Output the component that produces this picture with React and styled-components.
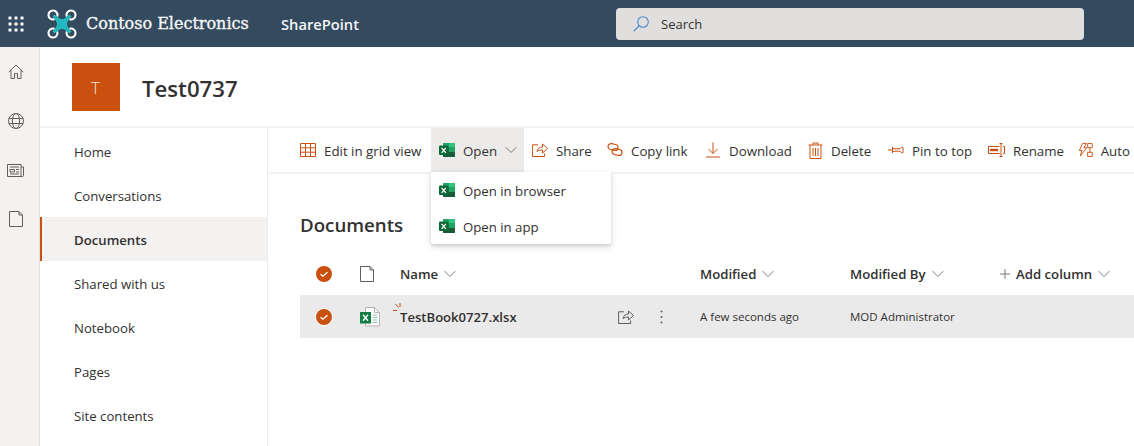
import React from "react";
import styled, { createGlobalStyle } from "styled-components";

const Global = createGlobalStyle`
  html, body { margin: 0; padding: 0; background: #fff; }
  body { font-family: "Open Sans", "Noto Sans", sans-serif; color: #323130; }
`;

const ORANGE = "#ca5010";

const Page = styled.div`
  width: 1134px; height: 446px; overflow: hidden;
  display: flex; flex-direction: column;
`;
const SuiteBar = styled.header`
  height: 47px; flex: none; background: #344a5f; display: flex; align-items: center;
`;
const Waffle = styled.div`
  width: 31px; padding-right: 16px; display: flex; justify-content: center; align-items: center;
`;
const Brand = styled.div`
  display: flex; align-items: center; gap: 9px; width: 234px; color: #fff;
`;
const BrandName = styled.span`
  font-family: "DejaVu Serif", serif; font-size: 16px; color: #f6f6f6;
  -webkit-text-stroke: 0.35px #f6f6f6;
`;
const Product = styled.span`
  width: 335px; font-size: 14.7px; font-weight: 600; color: #f3f6f8;
`;
const SearchBox = styled.div`
  width: 468px; height: 32px; background: #e1dfdd; border-radius: 4px;
  display: flex; align-items: center; gap: 12px; padding-left: 17px; box-sizing: border-box;
  font-size: 13px; color: #323130;
`;
const Main = styled.div`
  flex: 1; display: flex; min-height: 0;
`;
const Rail = styled.nav`
  width: 39px; flex: none; background: #f3f2f1; border-right: 1px solid #e1dfdd;
  display: flex; flex-direction: column; align-items: center; padding-top: 0.5px;
`;
const RailBtn = styled.div`
  height: 49px; width: 39px; display: flex; align-items: center; justify-content: center;
  margin-left: -8px;
`;
const Site = styled.div`
  flex: 1; min-width: 0; display: flex; flex-direction: column;
`;
const SiteHeader = styled.div`
  height: 81px; flex: none; display: flex; align-items: center; padding: 1px 0 0 32px; gap: 22px;
  border-bottom: 2px solid #f3f2f1; box-sizing: border-box;
`;
const SiteLogo = styled.div`
  width: 48px; height: 48px; background: #ca5010; color: #f3e6dc; display: flex;
  align-items: center; justify-content: center; font-size: 17px; font-weight: 300;
  padding-right: 1px; box-sizing: border-box;
`;
const SiteTitle = styled.h1`
  margin: 2px 0 0; font-size: 22.2px; font-weight: 600; color: #323130;
`;
const Body = styled.div`
  flex: 1; display: flex; min-height: 0;
`;
const LeftNav = styled.nav`
  width: 227px; flex: none; border-right: 1px solid #edebe9; padding-top: 1px;
  display: flex; flex-direction: column;
`;
const NavItem = styled.div`
  height: 44px; flex: none; display: flex; align-items: center; box-sizing: border-box; padding-top: 2px;
  padding-left: ${p => (p.$active ? 32 : 34)}px;
  font-size: 13.2px; font-weight: ${p => (p.$active ? 600 : 400)}; color: #323130;
  background: ${p => (p.$active ? "#f3f2f1" : "transparent")};
  border-left: ${p => (p.$active ? `2px solid ${ORANGE}` : "none")};
`;
const Content = styled.main`
  flex: 1; min-width: 0; display: flex; flex-direction: column; position: relative;
`;
const CommandBar = styled.div`
  height: 44px; flex: none; display: flex; border-bottom: 2px solid #f3f2f1; overflow: hidden;
  padding-left: 24px;
`;
const Cmd = styled.div`
  flex: none; width: ${p => p.$w}px; height: 44px; display: flex; align-items: center; gap: 8px;
  padding-left: 8px; box-sizing: border-box; white-space: nowrap; font-size: 13.3px; color: #323130;
  background: ${p => (p.$open ? "#edebe9" : "transparent")};
`;
const Label = styled.span`
  padding-top: 2px;
`;
const Menu = styled.div`
  position: absolute; left: 163px; top: 44px; width: 180px; background: #fff; z-index: 2;
  box-shadow: 0 1.6px 3.6px rgba(0,0,0,.13), 0 3px 8px rgba(0,0,0,.11);
  border-radius: 0 0 2px 2px;
`;
const MenuItem = styled.div`
  height: 36px; display: flex; align-items: center; gap: 8px; padding-left: 8px; font-size: 13.2px; color: #323130;
`;
const Library = styled.section`
  padding: 0 0 0 32px; display: flex; flex-direction: column;
`;
const LibTitle = styled.h2`
  margin: 0; height: 34px; padding-top: 34px; font-size: 18.7px; font-weight: 600; color: #323130;
  line-height: 34px;
`;
const Columns = "60px 40px 300px 150px 150px 1fr";
const HeadRow = styled.div`
  margin-top: 11px; height: 42px; display: grid; grid-template-columns: ${Columns}; align-items: center;
  font-size: 13.2px; font-weight: 600; color: #323130;
`;
const Row = styled.div`
  height: 43px; display: grid; grid-template-columns: ${Columns}; align-items: center;
  background: #ebeaea; font-size: 11.5px; color: #323130;
`;
const IconCell = styled.div`
  display: flex; align-items: center;
  padding-left: ${p => p.$pad || 0}px;
`;
const HeadCell = styled.div`
  display: flex; align-items: center; gap: 6px;
`;
const NameCell = styled.div`
  position: relative; display: flex; align-items: center; height: 100%;
  font-size: 13.1px; font-weight: 600;
`;
const FileName = styled.span`
  flex: 0 0 218px;
`;
const Sparkle = styled.svg`
  position: absolute; left: -7px; top: 8px;
`;
const RowActions = styled.div`
  display: flex; align-items: center; gap: 26px;
`;

const Stroke = ({ size = 16, w, h, children, color = ORANGE, sw = 1, vb }) => (
  <svg width={w || size} height={h || size} viewBox={vb || `0 0 ${w || size} ${h || size}`} fill="none" stroke={color} strokeWidth={sw}>
    {children}
  </svg>
);

const Chevron = ({ color = "#7a7876", w = 12 }) => (
  <svg width={w} height="8" viewBox="0 0 12 8" fill="none" stroke={color} strokeWidth="1"><path d="M.7 1.2 6 6.5l5.3-5.3" /></svg>
);

const Excel = () => (
  <svg width="16" height="16" viewBox="0 0 16 16">
    <rect x="4" y="1" width="12" height="14" rx="1" fill="#107c41" />
    <path d="M10 1h5a1 1 0 0 1 1 1v3.500h-6Z" fill="#33c481" />
    <rect x="4" y="1" width="6" height="4.500" fill="#21a366" />
    <rect x="10" y="5.500" width="6" height="4.500" fill="#21a366" />
    <rect x="4" y="10" width="12" height="5" rx="1" fill="#185c37" />
    <rect x="0" y="3.500" width="9.500" height="9.500" rx="1" fill="#0c6a38" />
    <path d="M2.600 5.800 6.900 10.800M6.900 5.800 2.600 10.800" stroke="#fff" strokeWidth="1.300" />
  </svg>
);

const Waffles = () => (
  <svg width="16" height="16" viewBox="0 0 16 16" fill="#fff">
    {[0.5, 6.5, 12.5].flatMap(y => [0.5, 6.5, 12.5].map(x => <rect key={x + "-" + y} x={x} y={y} width="3" height="3" rx=".6" />))}
  </svg>
);

const Drone = () => (
  <svg width="30" height="30" viewBox="0 0 30 30">
    <g fill="none" stroke="#fff" strokeWidth="2.100" strokeLinecap="round">
      <path d="M10.400 6.800A4.500 4.500 0 1 0 6.800 10.400" />
      <path d="M19.600 6.800A4.500 4.500 0 1 1 23.200 10.400" />
      <path d="M19.600 23.200A4.500 4.500 0 1 0 23.200 19.600" />
      <path d="M10.400 23.200A4.500 4.500 0 1 1 6.800 19.600" />
    </g>
    <path d="M5.500 7.500 7.500 5.500Q12 10 15 10Q18 10 22.500 5.500L24.500 7.500Q20 12 20 15Q20 18 24.500 22.500L22.500 24.500Q18 20 15 20Q12 20 7.500 24.500L5.500 22.500Q10 18 10 15Q10 12 5.500 7.500Z" fill="#20b9c0" />
  </svg>
);

const SearchIcon = () => (
  <svg width="16" height="16" viewBox="0 0 16 16" fill="none" stroke="#4f8ad0" strokeWidth="1.100">
    <circle cx="10" cy="6" r="5.300" /><path d="M6.200 9.800.6 15.400" strokeWidth="1.300" />
  </svg>
);

const RAIL = "#605e5c";
const HomeIcon = () => <Stroke color={RAIL}><path d="M.8 8 8 1l7.200 7M3 6.300v8.200h3.500v-5h3v5H13V6.300" /></Stroke>;
const GlobeIcon = () => <Stroke color={RAIL}><circle cx="8" cy="8" r="7.500" /><ellipse cx="8" cy="8" rx="3.600" ry="7.500" /><path d="M1 5.500h14M1 10.500h14" /></Stroke>;
const NewsIcon = () => <Stroke w={17} h={13} color={RAIL}><path d="M.5.5h13.500v12H.5zM14 3h2.500v8.500q0 1-1.200 1H14M3 3h9M3 10h9M3 5.500h4.500v2.500H3zM9 5.500h3M9 8h3" /></Stroke>;
const PageIcon = ({ color = RAIL }) => <Stroke w={14} h={16} color={color}><path d="M.5.5h9.500l3.500 3.500v11.500H.5zM10 .5V4h3.500" /></Stroke>;

const GridIcon = () => <Stroke><path d="M.5 1.500h15v13H.5zM.5 5.800h15M.5 10.200h15M5.500 1.500v13M10.500 1.500v13" /></Stroke>;
const ShareIcon = ({ color = ORANGE }) => <Stroke color={color}><path d="M5 9.500C5.500 6.500 7.500 5 10.500 5V2l5 4.500-5 4.500V8C8 8 6.300 8.500 5 9.500ZM6 2.800H.6v11.700h12v-3" /></Stroke>;
const LinkIcon = () => <Stroke sw={1.2}><rect x="1" y="2" width="10" height="6" rx="3" transform="rotate(12 6 5)" /><rect x="5" y="7" width="10" height="6" rx="3" transform="rotate(12 10 10)" /></Stroke>;
const DownloadIcon = () => <Stroke><path d="M8 .5v11M3.500 7 8 11.500 12.500 7M1 15h14" /></Stroke>;
const TrashIcon = () => <Stroke w={15} h={17}><path d="M.5 3h14M2 3v13.500h11V3M5 3V1h5v2M5 6v8M7.500 6v8M10 6v8" /></Stroke>;
const PinIcon = () => <Stroke><path d="M0 8h4.500M4.500 5v6M4.500 5.800l1.500 1h6l1.500-1.500h1.500v5.400h-1.500L12 9.200H6l-1.500 1" /></Stroke>;
const RenameIcon = () => <Stroke w={17} h={16}><path d="M.5 4.500h11M.5 11.500h11M.5 4.500v7" /><rect x="2" y="6.800" width="8" height="2.400" fill={ORANGE} stroke="none" /><path d="M11.500 1.500h3M11.500 14.500h3M13 1.500v13M15 4.500h1.500v7H15" /></Stroke>;
const AutoIcon = () => <Stroke><path d="M5 .8H9L6.500 5.500H9.500L2.500 14.500 4.300 8.500H1.500ZM10.500 1h5v4.500h-5zM10.500 10.500h5V15h-5zM13 5.500v5" /></Stroke>;

const CheckCircle = ({ ring }) => (
  <svg width="18" height="18" viewBox="0 0 18 18">
    {ring && <circle cx="9" cy="9" r="9" fill="#fff" />}
    <circle cx="9" cy="9" r="8" fill={ORANGE} />
    <path d="M5.600 9.200 7.900 11.200 12.500 7.200" fill="none" stroke="#fff" strokeWidth="1.300" />
  </svg>
);

const XlsFile = () => (
  <svg width="20" height="20" viewBox="0 0 20 20">
    <path d="M5.500 .5h9l5 5v13.500h-14Z" fill="#fff" stroke="#b5b3b1" />
    <path d="M14.500 .5v5h5" fill="none" stroke="#b5b3b1" />
    <path d="M12.500 8h5M12.500 10.500h5M12.500 13h5M12.500 15.500h5" stroke="#8fc5a5" strokeWidth="1.200" />
    <rect x="0" y="5" width="11" height="11.500" fill="#107c41" />
    <path d="M3 7.800 8 13.800M8 7.800 3 13.800" stroke="#fff" strokeWidth="1.400" />
  </svg>
);

const commands = [
  { label: "Edit in grid view", icon: <GridIcon />, w: 139 },
  { label: "Share", icon: <ShareIcon />, w: 75 },
  { label: "Copy link", icon: <LinkIcon />, w: 98 },
  { label: "Download", icon: <DownloadIcon />, w: 103 },
  { label: "Delete", icon: <TrashIcon />, w: 80 },
  { label: "Pin to top", icon: <PinIcon />, w: 100 },
  { label: "Rename", icon: <RenameIcon />, w: 90 },
  { label: "Auto", icon: <AutoIcon />, w: 60 },
];

const navItems = ["Home", "Conversations", "Documents", "Shared with us", "Notebook", "Pages", "Site contents"];

export default function App() {
  return (
    <Page>
      <Global />
      <SuiteBar>
        <Waffle><Waffles /></Waffle>
        <Brand><Drone /><BrandName>Contoso Electronics</BrandName></Brand>
        <Product>SharePoint</Product>
        <SearchBox><SearchIcon /><span>Search</span></SearchBox>
      </SuiteBar>
      <Main>
        <Rail>
          <RailBtn><HomeIcon /></RailBtn>
          <RailBtn><GlobeIcon /></RailBtn>
          <RailBtn><NewsIcon /></RailBtn>
          <RailBtn><PageIcon /></RailBtn>
        </Rail>
        <Site>
          <SiteHeader>
            <SiteLogo>T</SiteLogo>
            <SiteTitle>Test0737</SiteTitle>
          </SiteHeader>
          <Body>
            <LeftNav>
              {navItems.map(n => <NavItem key={n} $active={n === "Documents"}>{n}</NavItem>)}
            </LeftNav>
            <Content>
              <CommandBar>
                <Cmd $w={commands[0].w}>{commands[0].icon}<Label>{commands[0].label}</Label></Cmd>
                <Cmd $w={93} $open><Excel /><Label>Open</Label><Chevron /></Cmd>
                {commands.slice(1).map(c => <Cmd key={c.label} $w={c.w}>{c.icon}<Label>{c.label}</Label></Cmd>)}
              </CommandBar>
              <Menu>
                <MenuItem><Excel /><Label>Open in browser</Label></MenuItem>
                <MenuItem><Excel /><Label>Open in app</Label></MenuItem>
              </Menu>
              <Library>
                <LibTitle>Documents</LibTitle>
                <HeadRow>
                  <IconCell $pad={15}><CheckCircle /></IconCell>
                  <IconCell><PageIcon /></IconCell>
                  <HeadCell>Name <Chevron /></HeadCell>
                  <HeadCell>Modified <Chevron /></HeadCell>
                  <HeadCell>Modified By <Chevron /></HeadCell>
                  <HeadCell><Stroke size={10} color="#7a7876"><path d="M5 0v10M0 5h10" /></Stroke>Add column <Chevron /></HeadCell>
                </HeadRow>
                <Row>
                  <IconCell $pad={15}><CheckCircle ring /></IconCell>
                  <IconCell><XlsFile /></IconCell>
                  <NameCell>
                    <Sparkle width="11" height="9" viewBox="0 0 11 9" fill="none" stroke={ORANGE}><path d="M0 7.500h4M2.500 1l3 3.500M7 0v4" /></Sparkle>
                    <FileName>TestBook0727.xlsx</FileName>
                    <RowActions>
                      <ShareIcon color="#605e5c" />
                      <Stroke w={3} h={16} color="none"><circle cx="1.500" cy="2.500" r="1" fill="#605e5c" /><circle cx="1.500" cy="8" r="1" fill="#605e5c" /><circle cx="1.500" cy="13.500" r="1" fill="#605e5c" /></Stroke>
                    </RowActions>
                  </NameCell>
                  <div>A few seconds ago</div>
                  <div>MOD Administrator</div>
                  <div />
                </Row>
              </Library>
            </Content>
          </Body>
        </Site>
      </Main>
    </Page>
  );
}
